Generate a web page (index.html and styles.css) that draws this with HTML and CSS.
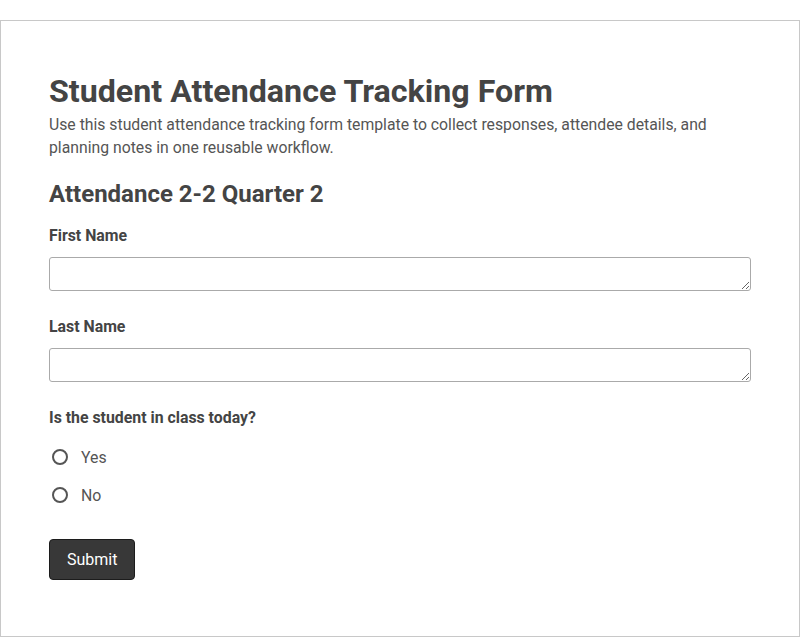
FILE: index.html
```html
<!DOCTYPE html>
<html lang="en">
<head>
    <meta charset="UTF-8">
    <meta name="viewport" content="width=device-width, initial-scale=1.0">
    <title>Student Attendance Tracking Form</title>
    <link rel="stylesheet" href="styles.css">
</head>
<body>
    <form class="form-card" onsubmit="return false">
        <h1 class="form-title">Student Attendance Tracking Form</h1>
        <p class="form-desc">Use this student attendance tracking form template to collect responses, attendee details, and planning notes in one reusable workflow.</p>

        <h2 class="section-title">Attendance 2-2 Quarter 2</h2>

        <div class="field">
            <label class="field-label" for="first-name">First Name</label>
            <textarea class="field-input" id="first-name" rows="1"></textarea>
        </div>

        <div class="field">
            <label class="field-label" for="last-name">Last Name</label>
            <textarea class="field-input" id="last-name" rows="1"></textarea>
        </div>

        <div class="field">
            <span class="field-label">Is the student in class today?</span>
            <div class="radio-list">
                <label class="radio-row"><input type="radio" name="in-class" value="yes"> Yes</label>
                <label class="radio-row"><input type="radio" name="in-class" value="no"> No</label>
            </div>
        </div>

        <button class="submit-btn" type="submit">Submit</button>
    </form>
</body>
</html>
```

FILE: styles.css
```css
body {
    margin: 0;
    padding-top: 20px;
    font-family: Roboto, "Liberation Sans", Arial, sans-serif;
    color: #444;
    background-color: #fff;
}
.form-card {
    box-sizing: border-box;
    width: 800px;
    border: 1px solid #c8c8c8;
    padding: 48px 48px 56px;
}
.form-title {
    margin: 3px 0 0;
    font-size: 32.2px;
    line-height: 38px;
    font-weight: 700;
    color: #444;
}
.form-desc {
    margin: 3px 0 0;
    font-size: 15.78px;
    line-height: 23px;
    color: #555;
}
.section-title {
    margin: 21px 0 0;
    font-size: 24px;
    line-height: 28px;
    font-weight: 700;
    color: #444;
}
.field {
    margin-top: 18px;
}
.field + .field {
    margin-top: 26px;
}
.field-label {
    display: block;
    font-size: 15.85px;
    line-height: 19px;
    font-weight: 700;
    color: #444;
}
.field-input {
    display: block;
    box-sizing: border-box;
    width: 100%;
    height: 34px;
    margin-top: 12px;
    padding: 6px 8px;
    border: 1px solid #aaa;
    border-radius: 3px;
    font-family: inherit;
    font-size: 16px;
    resize: vertical;
    background-color: #fff;
}
.radio-list {
    display: flex;
    flex-direction: column;
    gap: 16px;
    margin-top: 19px;
}
.radio-row {
    display: flex;
    align-items: center;
    gap: 13px;
    height: 22px;
    padding-left: 3px;
    font-size: 15.85px;
    color: #555;
}
.radio-row input {
    appearance: none;
    -webkit-appearance: none;
    box-sizing: border-box;
    width: 16px;
    height: 16px;
    margin: 0;
    border: 2px solid #555;
    border-radius: 50%;
    background-color: #fff;
}
.radio-row input:checked {
    background: radial-gradient(circle, #555 0 4px, #fff 4.5px);
}
.submit-btn {
    display: block;
    margin-top: 33px;
    padding: 10px 17px;
    font-family: inherit;
    font-size: 16px;
    line-height: 19px;
    color: #fff;
    background-color: #383838;
    border: 1px solid #1c1c1c;
    border-radius: 4px;
    cursor: pointer;
}
```
